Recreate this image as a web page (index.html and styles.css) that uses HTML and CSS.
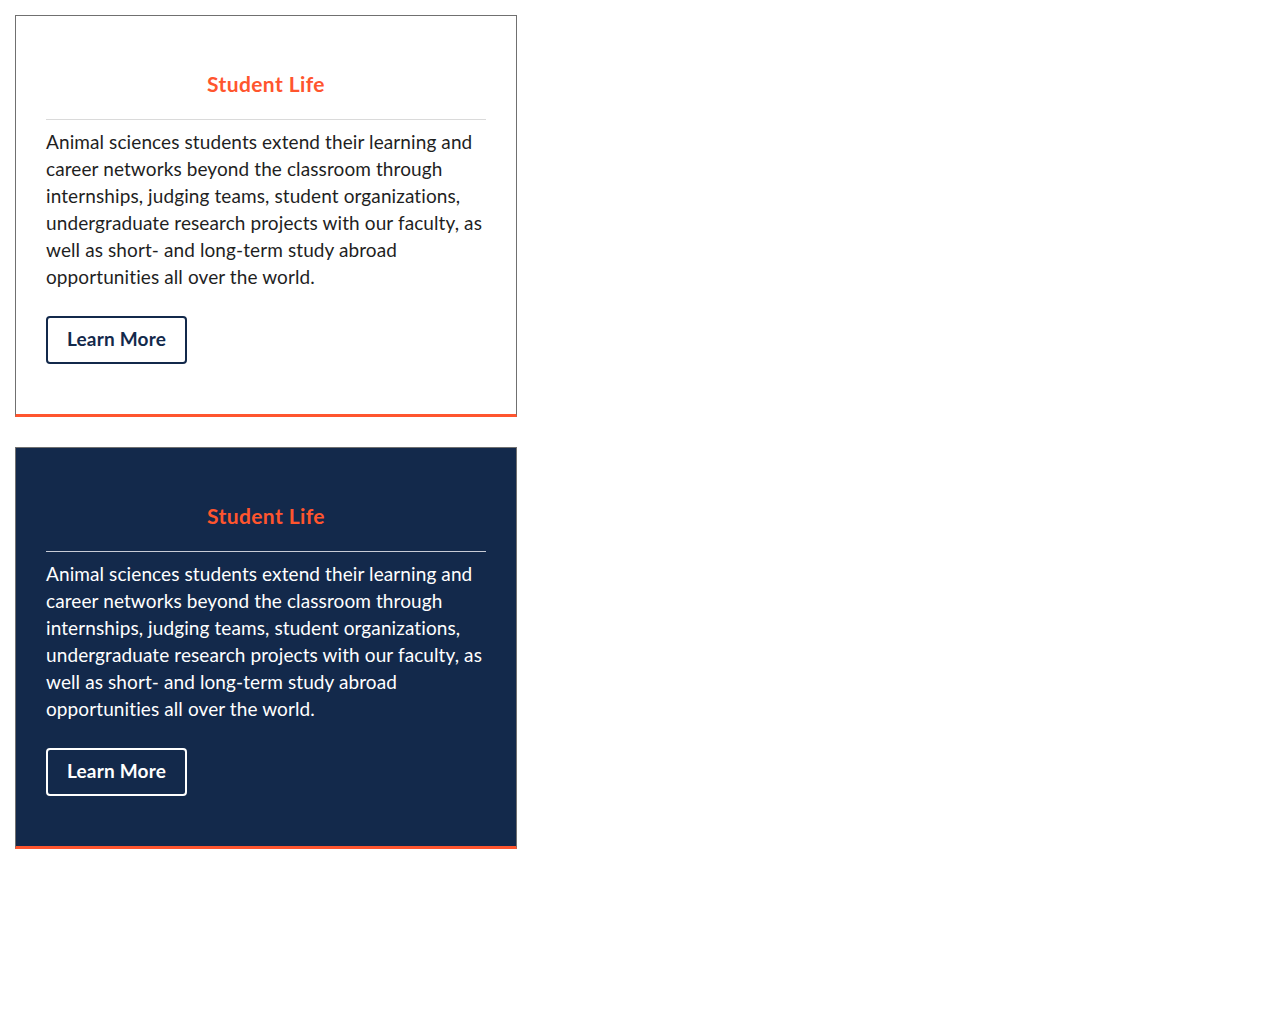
FILE: index.html
```html
<!DOCTYPE html>
<html lang="en">
<head>
<meta charset="utf-8">
<title>Student Life</title>
<link rel="stylesheet" href="styles.css">
</head>
<body>
<div class="stack">
  <section class="card">
    <h2 class="card-title">Student Life</h2>
    <p class="card-text">Animal sciences students extend their learning and career networks beyond the classroom through internships, judging teams, student organizations, undergraduate research projects with our faculty, as well as short- and long-term study abroad opportunities all over the world.</p>
    <a class="btn" href="#">Learn More</a>
  </section>
  <section class="card card-dark">
    <h2 class="card-title">Student Life</h2>
    <p class="card-text">Animal sciences students extend their learning and career networks beyond the classroom through internships, judging teams, student organizations, undergraduate research projects with our faculty, as well as short- and long-term study abroad opportunities all over the world.</p>
    <a class="btn" href="#">Learn More</a>
  </section>
</div>
</body>
</html>
```
FILE: styles.css
```css
body {
  margin: 0;
  padding: 15px;
  font-family: Lato, "Liberation Sans", sans-serif;
  background: #fff;
}
.stack {
  display: flex;
  flex-direction: column;
  gap: 30px;
  width: 502px;
}
.card {
  border: 1px solid #707070;
  border-bottom: 3px solid #ff552e;
  padding: 55px 30px 50px;
  background: #fff;
  color: #1f1f1f;
  display: flex;
  flex-direction: column;
  align-items: flex-start;
}
.card-title {
  align-self: stretch;
  margin: 0;
  padding-bottom: 22px;
  border-bottom: 1px solid #dadada;
  text-align: center;
  color: #ff552e;
  font-size: 21px;
  line-height: 26px;
  font-weight: 700;
  letter-spacing: 0.4px;
}
.card-text {
  margin: 8px 0 26px;
  font-size: 19px;
  line-height: 27px;
  letter-spacing: 0.1px;
}
.btn {
  display: inline-flex;
  align-items: center;
  justify-content: center;
  width: 141px;
  height: 48px;
  padding-bottom: 4px;
  box-sizing: border-box;
  border: 2px solid #13294b;
  border-radius: 4px;
  color: #13294b;
  text-decoration: none;
  font-weight: 700;
  font-size: 19px;
  letter-spacing: 0.2px;
}
.card-dark {
  background: #13294b;
  color: #fff;
}
.card-dark .card-title {
  border-bottom-color: #c8ccd6;
}
.card-dark .btn {
  border-color: #fff;
  color: #fff;
}
```
